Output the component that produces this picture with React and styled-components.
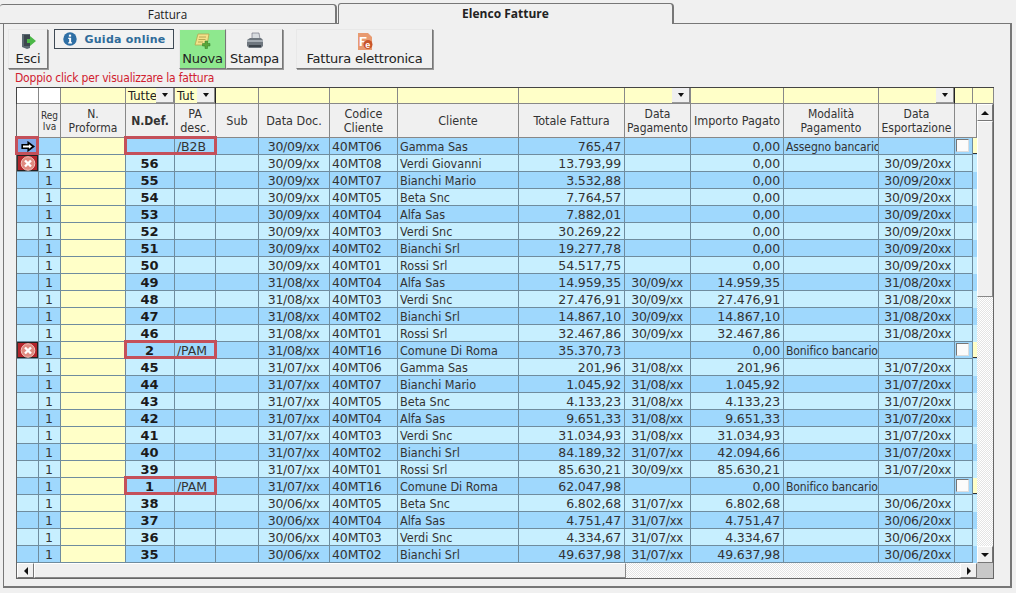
import React from "react";
import styled, { createGlobalStyle } from "styled-components";

const Global = createGlobalStyle`
  html, body { margin: 0; padding: 0; background: #f0f0f0; overflow: hidden; }
  #root { width: 1016px; height: 593px; }
`;

const BODY = `"DejaVu Sans Condensed", "DejaVu Sans", sans-serif`;
const WIDE = `"DejaVu Sans", sans-serif`;
const COLS = "22px 22px 65px 49px 41px 43px 71px 68px 121px 106px 66px 93px 95px 76px 18px 4px";
const LINE = "#6f8c9e";

const Page = styled.div`
  width: 1016px; height: 593px; background: #f0f0f0; display: flex; flex-direction: column;
  box-sizing: border-box; padding: 3px 4px 5px 0; font-family: ${BODY}; color: #222;
`;
const TabBar = styled.div`
  display: flex; height: 21px; align-items: flex-end; position: relative; z-index: 1; margin-bottom: -1px;
`;
const Tab = styled.div`
  box-sizing: border-box; height: ${p => (p.$active ? "21px" : "20px")};
  width: ${p => (p.$active ? "336px" : "337px")};
  margin-left: ${p => (p.$active ? "1px" : "0")};
  border: 1px solid #777; border-bottom: ${p => (p.$active ? "none" : "1px solid #777")};
  border-left: ${p => (p.$active ? "1px solid #777" : "none")};
  border-right-width: 2px;
  border-top-left-radius: 3px; border-top-right-radius: 4px;
  background: #f0f0f0; display: flex; align-items: center; justify-content: center;
  font: ${p => (p.$active ? 700 : 400)} ${p => (p.$active ? "12px" : "11.7px")} "Open Sans", "Noto Sans", sans-serif; color: #222;
  padding-bottom: 1px;
`;
const Pane = styled.div`
  flex: 1; box-sizing: border-box; margin-left: 3px; border: 1px solid #777; border-right-width: 2px;
  border-bottom-width: 2px; padding: 5px 17px 0 4px; display: flex; flex-direction: column;
`;
const Toolbar = styled.div`
  display: flex; height: 40px; align-items: flex-start;
`;
const ToolButton = styled.div`
  box-sizing: border-box; height: 40px; width: ${p => p.$w}px; margin-left: ${p => p.$gap || 0}px;
  background: ${p => (p.$green ? "#8ee88e" : "#f0f0f0")};
  border: 1px solid #e8e8e8; border-right-color: #777; border-bottom-color: #777;
  box-shadow: 1px 1px 0 #999;
  display: flex; flex-direction: column; align-items: center; justify-content: flex-start; padding-top: 2px;
  font: 400 13px ${WIDE}; color: #222; letter-spacing: -0.2px;
  span { line-height: 16px; margin-top: 1px; white-space: nowrap; }
`;
const IconSlot = styled.div`
  height: 18px; display: flex; align-items: center; justify-content: center;
`;
const Help = styled.div`
  box-sizing: border-box; width: 120px; height: 20px; margin-left: 6px; border: 1px solid #3f4a55; background: #f2f2f2;
  display: flex; align-items: center; justify-content: center; gap: 8px;
  font: 700 11px ${WIDE}; color: #2f6b9a; letter-spacing: 0.25px;
`;
const Hint = styled.div`
  height: 18px; line-height: 19px; margin-left: 7px; font-size: 12px; letter-spacing: -0.2px; color: #d0202f; white-space: nowrap;
`;
const Grid = styled.div`
  margin-left: 8px; width: 978px; display: flex; flex-direction: column; position: relative;
`;
const FilterRow = styled.div`
  display: grid; grid-template-columns: 22px 22px 65px 49px 41px 43px 71px 68px 121px 106px 66px 93px 95px 76px 18px 21px;
  height: 17px; border-top: 1px solid #444; border-left: 1px solid #444; box-sizing: border-box; width: 978px;
`;
const FilterCell = styled.div`
  box-sizing: border-box; border-right: 1px solid ${p => (p.$dark ? "#222" : "#888")}; border-bottom: 1px solid #888;
  background: ${p => (p.$white ? "#fff" : "#ffffc8")}; position: relative; overflow: hidden;
  font-size: 13px; line-height: 15px; padding-left: 2px; white-space: nowrap; color: #222;
`;
const DropButton = styled.div`
  position: absolute; right: 0; top: 0; width: 18px; height: 15px; background: #f0f0f0;
  border-right: 1px solid #888; border-bottom: 1px solid #999; box-sizing: border-box;
  display: flex; align-items: center; justify-content: center;
  &::after { content: ""; border: 3.5px solid transparent; border-top: 4px solid #111; border-bottom: 0; }
`;
const Body = styled.div`
  display: flex; border-left: 1px solid #666; width: 978px; box-sizing: border-box;
`;
const TableColumn = styled.div`
  width: 960px; flex: none; display: flex; flex-direction: column;
`;
const HeaderRow = styled.div`
  display: grid; grid-template-columns: 22px 22px 65px 49px 41px 43px 71px 68px 121px 106px 66px 93px 95px 76px 22px; height: 34px;
`;
const HeaderCell = styled.div`
  box-sizing: border-box; background: #f0f0f0; border-right: 1px solid #888; border-bottom: 1px solid #888;
  display: flex; align-items: center; justify-content: center; text-align: center; padding-top: 1px;
  font-size: ${p => (p.$small ? "10px" : p.$tight ? "12px" : "12.5px")};
  line-height: ${p => (p.$small ? "11px" : "14px")};
  font-weight: ${p => (p.$bold ? 700 : 400)}; color: #333;
`;
const Row = styled.div`
  display: grid; grid-template-columns: ${COLS}; height: 17px; background: ${p => (p.$dark ? "#9fd8fd" : "#c7efff")};
`;
const Cell = styled.div`
  box-sizing: border-box; border-right: 1px solid ${LINE}; border-bottom: 1px solid ${LINE};
  font-size: ${p => (p.$tight ? "12px" : "12.5px")}; line-height: 16px; white-space: nowrap; overflow: hidden; color: #333;
  text-align: ${p => p.$align || "left"}; padding: 1px ${p => (p.$flush ? 0 : "3px")} 0 ${p => (p.$flush ? 0 : "2px")};
  background: ${p => (p.$yellow ? "#ffffc8" : "transparent")};
  ${p => p.$bold ? `font-family: ${WIDE}; font-weight: 700; color: #1b1b1b; font-size: 13px;` : ""}
  ${p => p.$wide ? `font-family: ${WIDE}; font-size: 12.5px; letter-spacing: -0.1px;` : ""}
  ${p => p.$date ? "letter-spacing: -0.3px;" : ""}
  ${p => p.$tight ? "letter-spacing: -0.1px;" : ""}
  position: relative;
`;
const Sliver = styled.div`
  box-sizing: border-box; height: 16px; background: #ffffc8; border-bottom: 1px solid #333;
`;
const Check = styled.div`
  box-sizing: border-box; width: 13px; height: 13px; margin: 0 0 0 1px; background: #fbfbfb;
  border: 1px solid #777; border-right-color: #ddd; border-bottom-color: #ddd;
`;
const Mark = styled.div`
  position: absolute; inset: 0; display: flex; align-items: center; justify-content: center;
  background: ${p => (p.$err ? "#b3262c" : "#7fa9e8")};
  ${p => p.$err ? "border: 1px solid #222; border-left-color:#333;" : ""}
`;
const Highlight = styled.div`
  position: absolute; box-sizing: border-box; border: 3px solid #c4505a; pointer-events: none;
  left: ${p => p.$x}px; top: ${p => p.$y}px; width: ${p => p.$w}px; height: ${p => p.$h}px;
`;
const VScroll = styled.div`
  width: 17px; flex: none; display: flex; flex-direction: column; box-sizing: border-box; border-right: 1px solid #666;
  background: #f0f0f0;
`;
const ScrollBtn = styled.div`
  box-sizing: border-box; width: ${p => p.$w || 16}px; height: ${p => p.$h || 17}px; flex: none; background: #f0f0f0;
  border: 1px solid #fff; border-right-color: #777; border-bottom-color: #777;
  display: flex; align-items: center; justify-content: center;
`;
const Thumb = styled.div`
  flex: none; box-sizing: border-box; background: #f0f0f0;
  height: ${p => p.$h || "auto"}; width: ${p => p.$w || "auto"};
  border: 1px solid #fff; border-right-color: #888; border-bottom-color: #888;
`;
const Track = styled.div`
  flex: 1; background-color: #f4f4f4;
  background-image: conic-gradient(#e4e4e4 25%, #fff 0 50%, #e4e4e4 0 75%, #fff 0);
  background-size: 2px 2px;
`;
const HScroll = styled.div`
  display: flex; height: 16px; width: 978px; box-sizing: border-box; border-left: 1px solid #666; border-bottom: 1px solid #666; border-right: 1px solid #666;
`;
const Corner = styled.div`
  width: 16px; flex: none; background: #c8c8c8;
`;
const Tri = styled.div`
  width: 0; height: 0; border: 4px solid transparent;
  ${p => p.$dir === "up" && "border-bottom: 4px solid #111; border-top: 0;"}
  ${p => p.$dir === "down" && "border-top: 4px solid #111; border-bottom: 0;"}
  ${p => p.$dir === "left" && "border-right: 4px solid #111; border-left: 0;"}
  ${p => p.$dir === "right" && "border-left: 4px solid #111; border-right: 0;"}
`;
const Xx = styled.small`font-size: 11.5px; font-family: ${WIDE};`;

const ExitIcon = () => (
  <svg width="18" height="18" viewBox="0 0 18 18">
    <path d="M3 2h8v14l-3 1-5-2z" fill="#5c6a72" />
    <path d="M5 3h6v11H5z" fill="#3c474e" />
    <path d="M8 7h3V4l6 5-6 5v-3H8z" fill="#4cb848" />
  </svg>
);
const InfoIcon = () => (
  <svg width="14" height="14" viewBox="0 0 15 15">
    <circle cx="7.5" cy="7.5" r="7.2" fill="#2f6fa5" />
    <rect x="6.3" y="2.8" width="2.4" height="2.2" fill="#fff" />
    <path d="M5.6 6.2h3.1v4.8h1v1.2H5.6V11h1V7.4h-1z" fill="#fff" />
  </svg>
);
const NewIcon = () => (
  <svg width="20" height="18" viewBox="0 0 20 18">
    <path d="M5 2h11l-2 11H2z" fill="#f3e28a" stroke="#b3a650" strokeWidth=".8" />
    <path d="M6 5h7M5.500 7.500h7M5 10h5" stroke="#a69a46" strokeWidth=".8" />
    <path d="M12 9h2.500v2.500H17V14h-2.500v2.500H12V14H9.500v-2.500H12z" fill="#5ba83a" stroke="#2f7a25" strokeWidth=".5" />
  </svg>
);
const PrintIcon = () => (
  <svg width="20" height="18" viewBox="0 0 20 18">
    <path d="M7 1h7l1 6H7z" fill="#d8dce0" stroke="#667" strokeWidth=".6" />
    <path d="M2 8l3-2h11l2 2v6l-2 2H4l-2-2z" fill="#6e767e" />
    <path d="M2 8h16v2H2z" fill="#a6adb4" />
    <path d="M4 13h12v2H4z" fill="#3d444b" />
  </svg>
);
const FeIcon = () => (
  <svg width="18" height="19" viewBox="0 0 18 19">
    <path d="M2 1h10l4 4v13H2z" fill="#e89a70" />
    <text x="3" y="14" fontFamily="Liberation Sans, sans-serif" fontWeight="700" fontSize="13" fill="#fff">F</text>
    <circle cx="12" cy="12.500" r="4.500" fill="#c8552a" />
    <text x="9.300" y="15.500" fontFamily="Liberation Sans, sans-serif" fontWeight="700" fontSize="9" fill="#fff">e</text>
  </svg>
);
const ArrowIcon = () => (
  <svg width="14" height="11" viewBox="0 0 14 11">
    <path d="M1 3.500h6V1l6 4.500L7 10V7.500H1z" fill="#000" stroke="#000" strokeWidth="1.200" />
    <path d="M2 4.500h6V3.200l3 2.300-3 2.300V6.500H2z" fill="#fff" />
  </svg>
);
const ErrIcon = () => (
  <svg width="16" height="15" viewBox="0 0 16 15">
    <circle cx="8" cy="7.500" r="6.800" fill="#e08a80" stroke="#f0c4bc" />
    <path d="M5 4.500l6 6M11 4.500l-6 6" stroke="#fff" strokeWidth="2.400" />
  </svg>
);

const rows = [
  ["", "", "/B2B", "30/09/", "40MT06", "Gamma Sas", "765,47", "", "0,00", "Assegno bancario", "", "arrow"],
  ["1", "56", "", "30/09/", "40MT08", "Verdi Giovanni", "13.793,99", "", "0,00", "", "30/09/20", "err"],
  ["1", "55", "", "30/09/", "40MT07", "Bianchi Mario", "3.532,88", "", "0,00", "", "30/09/20"],
  ["1", "54", "", "30/09/", "40MT05", "Beta Snc", "7.764,57", "", "0,00", "", "30/09/20"],
  ["1", "53", "", "30/09/", "40MT04", "Alfa Sas", "7.882,01", "", "0,00", "", "30/09/20"],
  ["1", "52", "", "30/09/", "40MT03", "Verdi Snc", "30.269,22", "", "0,00", "", "30/09/20"],
  ["1", "51", "", "30/09/", "40MT02", "Bianchi Srl", "19.277,78", "", "0,00", "", "30/09/20"],
  ["1", "50", "", "30/09/", "40MT01", "Rossi Srl", "54.517,75", "", "0,00", "", "30/09/20"],
  ["1", "49", "", "31/08/", "40MT04", "Alfa Sas", "14.959,35", "30/09/", "14.959,35", "", "31/08/20"],
  ["1", "48", "", "31/08/", "40MT03", "Verdi Snc", "27.476,91", "30/09/", "27.476,91", "", "31/08/20"],
  ["1", "47", "", "31/08/", "40MT02", "Bianchi Srl", "14.867,10", "30/09/", "14.867,10", "", "31/08/20"],
  ["1", "46", "", "31/08/", "40MT01", "Rossi Srl", "32.467,86", "30/09/", "32.467,86", "", "31/08/20"],
  ["1", "2", "/PAM", "31/08/", "40MT16", "Comune Di Roma", "35.370,73", "", "0,00", "Bonifico bancario", "", "err"],
  ["1", "45", "", "31/07/", "40MT06", "Gamma Sas", "201,96", "31/08/", "201,96", "", "31/07/20"],
  ["1", "44", "", "31/07/", "40MT07", "Bianchi Mario", "1.045,92", "31/08/", "1.045,92", "", "31/07/20"],
  ["1", "43", "", "31/07/", "40MT05", "Beta Snc", "4.133,23", "31/08/", "4.133,23", "", "31/07/20"],
  ["1", "42", "", "31/07/", "40MT04", "Alfa Sas", "9.651,33", "31/08/", "9.651,33", "", "31/07/20"],
  ["1", "41", "", "31/07/", "40MT03", "Verdi Snc", "31.034,93", "31/08/", "31.034,93", "", "31/07/20"],
  ["1", "40", "", "31/07/", "40MT02", "Bianchi Srl", "84.189,32", "31/07/", "42.094,66", "", "31/07/20"],
  ["1", "39", "", "31/07/", "40MT01", "Rossi Srl", "85.630,21", "30/09/", "85.630,21", "", "31/07/20"],
  ["1", "1", "/PAM", "31/07/", "40MT16", "Comune Di Roma", "62.047,98", "", "0,00", "Bonifico bancario", ""],
  ["1", "38", "", "30/06/", "40MT05", "Beta Snc", "6.802,68", "31/07/", "6.802,68", "", "30/06/20"],
  ["1", "37", "", "30/06/", "40MT04", "Alfa Sas", "4.751,47", "31/07/", "4.751,47", "", "30/06/20"],
  ["1", "36", "", "30/06/", "40MT03", "Verdi Snc", "4.334,67", "31/07/", "4.334,67", "", "30/06/20"],
  ["1", "35", "", "30/06/", "40MT02", "Bianchi Srl", "49.637,98", "31/07/", "49.637,98", "", "30/06/20"],
];

const Dated = ({ v }) => (v ? <>{v}<Xx>xx</Xx></> : null);

const headers = [
  ["", {}], ["Reg\nIva", { $small: true }], ["N.\nProforma", { $tight: true }], ["N.Def.", { $bold: true, $tight: true }], ["PA\ndesc.", {}],
  ["Sub", {}], ["Data Doc.", {}], ["Codice\nCliente", {}], ["Cliente", {}], ["Totale Fattura", {}],
  ["Data\nPagamento", { $tight: true }], ["Importo Pagato", {}], ["Modalità\nPagamento", { $tight: true }], ["Data\nEsportazione", { $tight: true }], ["", {}],
];

export default function App() {
  return (
    <Page>
      <Global />
      <TabBar>
        <Tab>Fattura</Tab>
        <Tab $active>Elenco Fatture</Tab>
      </TabBar>
      <Pane>
        <Toolbar>
          <ToolButton $w={40}><IconSlot><ExitIcon /></IconSlot><span>Esci</span></ToolButton>
          <Help><InfoIcon />Guida online</Help>
          <ToolButton $w={47} $gap={5} $green><IconSlot><NewIcon /></IconSlot><span>Nuova</span></ToolButton>
          <ToolButton $w={57}><IconSlot><PrintIcon /></IconSlot><span>Stampa</span></ToolButton>
          <ToolButton $w={137} $gap={13}><IconSlot><FeIcon /></IconSlot><span>Fattura elettronica</span></ToolButton>
        </Toolbar>
        <Hint>Doppio click per visualizzare la fattura</Hint>
        <Grid>
          <FilterRow>
            <FilterCell $white /><FilterCell $white /><FilterCell />
            <FilterCell>Tutte<DropButton /></FilterCell>
            <FilterCell $dark>Tut<DropButton /></FilterCell>
            <FilterCell /><FilterCell /><FilterCell /><FilterCell /><FilterCell />
            <FilterCell><DropButton /></FilterCell>
            <FilterCell /><FilterCell />
            <FilterCell $dark><DropButton /></FilterCell>
            <FilterCell /><FilterCell />
          </FilterRow>
          <Body>
            <TableColumn>
              <HeaderRow>
                {headers.map(([t, p], i) => (
                  <HeaderCell key={i} {...p}>
                    <div>{t.split("\n").map((l, j) => <div key={j}>{l}</div>)}</div>
                  </HeaderCell>
                ))}
              </HeaderRow>
              {rows.map((r, i) => (
                <Row key={i} $dark={i % 2 === 0}>
                  <Cell $flush>
                    {r[11] === "arrow" && <Mark><ArrowIcon /></Mark>}
                    {r[11] === "err" && <Mark $err><ErrIcon /></Mark>}
                  </Cell>
                  <Cell $align="center" $wide>{r[0]}</Cell>
                  <Cell $yellow />
                  <Cell $align="center" $bold>{r[1]}</Cell>
                  <Cell $wide>{r[2]}</Cell>
                  <Cell />
                  <Cell $align="center" $wide $date><Dated v={r[3]} /></Cell>
                  <Cell $wide>{r[4]}</Cell>
                  <Cell>{r[5]}</Cell>
                  <Cell $align="right" $wide>{r[6]}</Cell>
                  <Cell $align="center" $wide $date><Dated v={r[7]} /></Cell>
                  <Cell $align="right" $wide>{r[8]}</Cell>
                  <Cell $tight>{r[9]}</Cell>
                  <Cell $align="right" $wide $date><Dated v={r[10]} /></Cell>
                  <Cell $flush>{r[9] && <Check />}</Cell>
                  <div>{r[9] && <Sliver />}</div>
                </Row>
              ))}
            </TableColumn>
            <VScroll>
              <ScrollBtn><Tri $dir="up" /></ScrollBtn>
              <Thumb $h="176px" />
              <Track />
              <ScrollBtn><Tri $dir="down" /></ScrollBtn>
            </VScroll>
          </Body>
          <HScroll>
            <ScrollBtn $h={15} $w={17}><Tri $dir="left" /></ScrollBtn>
            <Thumb $w="592px" />
            <Track />
            <ScrollBtn $h={15} $w={17}><Tri $dir="right" /></ScrollBtn>
            <Corner />
          </HScroll>
          <Highlight $x={-1} $y={49} $w={24} $h={19} />
          <Highlight $x={108} $y={49} $w={93} $h={19} />
          <Highlight $x={108} $y={253} $w={93} $h={19} />
          <Highlight $x={108} $y={389} $w={93} $h={19} />
        </Grid>
      </Pane>
    </Page>
  );
}
